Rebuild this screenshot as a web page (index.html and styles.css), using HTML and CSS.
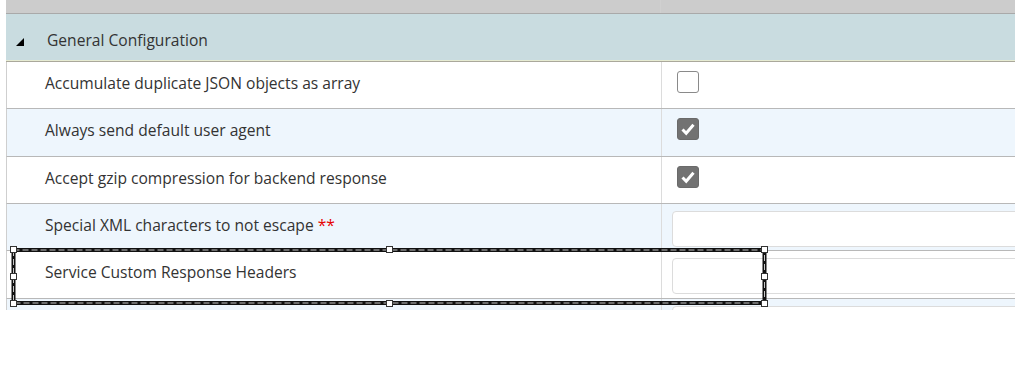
FILE: index.html
```html
<!DOCTYPE html>
<html>
<head>
<meta charset="utf-8">
<link rel="stylesheet" href="styles.css">
</head>
<body>
<div class="page">
  <div class="grid">
    <div class="topbar"><div class="tb-left"></div><div class="tb-right"></div></div>
    <div class="section-head">
      <span class="tri"></span>
      <span class="section-title">General Configuration</span>
    </div>
    <div class="row">
      <div class="label">Accumulate duplicate JSON objects as array</div>
      <div class="value"><span class="cb"></span></div>
    </div>
    <div class="row alt">
      <div class="label">Always send default user agent</div>
      <div class="value"><span class="cb checked"><svg viewBox="0 0 22 22" width="22" height="22"><path d="M5.5 11.5 L9.2 15.2 L16.5 6.8" fill="none" stroke="#fff" stroke-width="3"/></svg></span></div>
    </div>
    <div class="row">
      <div class="label">Accept gzip compression for backend response</div>
      <div class="value"><span class="cb checked"><svg viewBox="0 0 22 22" width="22" height="22"><path d="M5.5 11.5 L9.2 15.2 L16.5 6.8" fill="none" stroke="#fff" stroke-width="3"/></svg></span></div>
    </div>
    <div class="row alt">
      <div class="label">Special XML characters to not escape <span class="req">**</span></div>
      <div class="value input-cell"><div class="input"></div></div>
    </div>
    <div class="row">
      <div class="label">Service Custom Response Headers</div>
      <div class="value input-cell"><div class="input"></div></div>
    </div>
    <div class="row alt">
      <div class="label"></div>
      <div class="value input-cell"><div class="input"></div></div>
    </div>
  </div>
  <svg class="selection" width="762" height="64" viewBox="0 0 762 64">
    <rect x="4.5" y="5" width="751" height="53" fill="none" stroke="#111" stroke-width="4"/>
    <rect x="4.5" y="5" width="751" height="53" fill="none" stroke="#c8c8c8" stroke-width="1" stroke-dasharray="6 3"/>
    <g fill="#fff" stroke="#333" stroke-width="1">
      <rect x="1.5" y="1.5" width="6" height="6"/>
      <rect x="377.5" y="1.5" width="6" height="6"/>
      <rect x="752.5" y="1.5" width="6" height="6"/>
      <rect x="1.5" y="28.5" width="6" height="6"/>
      <rect x="752.5" y="28.5" width="6" height="6"/>
      <rect x="1.5" y="55.5" width="6" height="6"/>
      <rect x="377.5" y="55.5" width="6" height="6"/>
      <rect x="752.5" y="55.5" width="6" height="6"/>
    </g>
  </svg>
</div>
</body>
</html>
```

FILE: styles.css
```css
html, body {
  margin: 0;
  padding: 0;
  background: #fff;
}
body {
  font-family: "Open Sans", "Noto Sans", Arial, sans-serif;
  color: #333;
  overflow: hidden;
}
.page {
  position: relative;
  height: 310px;
  overflow: hidden;
  padding-left: 6px;
}
.grid {
  width: 1100px;
  display: flex;
  flex-direction: column;
}
.topbar {
  height: 13px;
  background: #cccccc;
  border-bottom: 1px solid #a9a9a9;
  display: grid;
  grid-template-columns: 655px 1fr;
}
.tb-left {
  border-right: 1px solid #d0d0d0;
}
.section-head {
  height: 47px;
  background: #c9dce0;
  border-bottom: 1px solid #e6ebd2;
  box-shadow: 0 1px 0 #aaa89b;
  margin-bottom: 1px;
  display: flex;
  align-items: center;
  box-sizing: border-box;
}
.tri {
  width: 0;
  height: 0;
  margin-left: 10px;
  border-left: 8px solid transparent;
  border-bottom: 8px solid #000;
  margin-top: 9px;
}
.section-title {
  margin-left: 23px;
  margin-top: 6px;
  font-size: 15.6px;
}
.row {
  display: grid;
  grid-template-columns: 655px 1fr;
  height: 47.33px;
  box-sizing: border-box;
  border-bottom: 1px solid #b8b8b8;
  border-left: 1px solid #cfcfcf;
  background: #fff;
}
.row.alt {
  background: #eef6fd;
}
.label {
  border-right: 1px solid #dcdcdc;
  padding-left: 38px;
  padding-top: 10px;
  font-size: 15.6px;
  line-height: 22px;
}
.req {
  color: #e60000;
}
.value {
  padding-left: 15px;
  padding-top: 9px;
}
.cb {
  display: block;
  width: 22px;
  height: 22px;
  box-sizing: border-box;
  border: 1px solid #8a8a8a;
  border-radius: 3px;
  background: #fff;
}
.cb.checked {
  background: #727272;
  border-color: #6a6a6a;
}
.cb svg {
  display: block;
  margin: -1px;
}
.input-cell {
  padding-left: 10px;
  padding-top: 7px;
}
.input {
  height: 36px;
  box-sizing: border-box;
  border: 1px solid #dcdcdc;
  border-radius: 4px;
  background: #fff;
}
.selection {
  position: absolute;
  left: 9px;
  top: 245px;
}
```
